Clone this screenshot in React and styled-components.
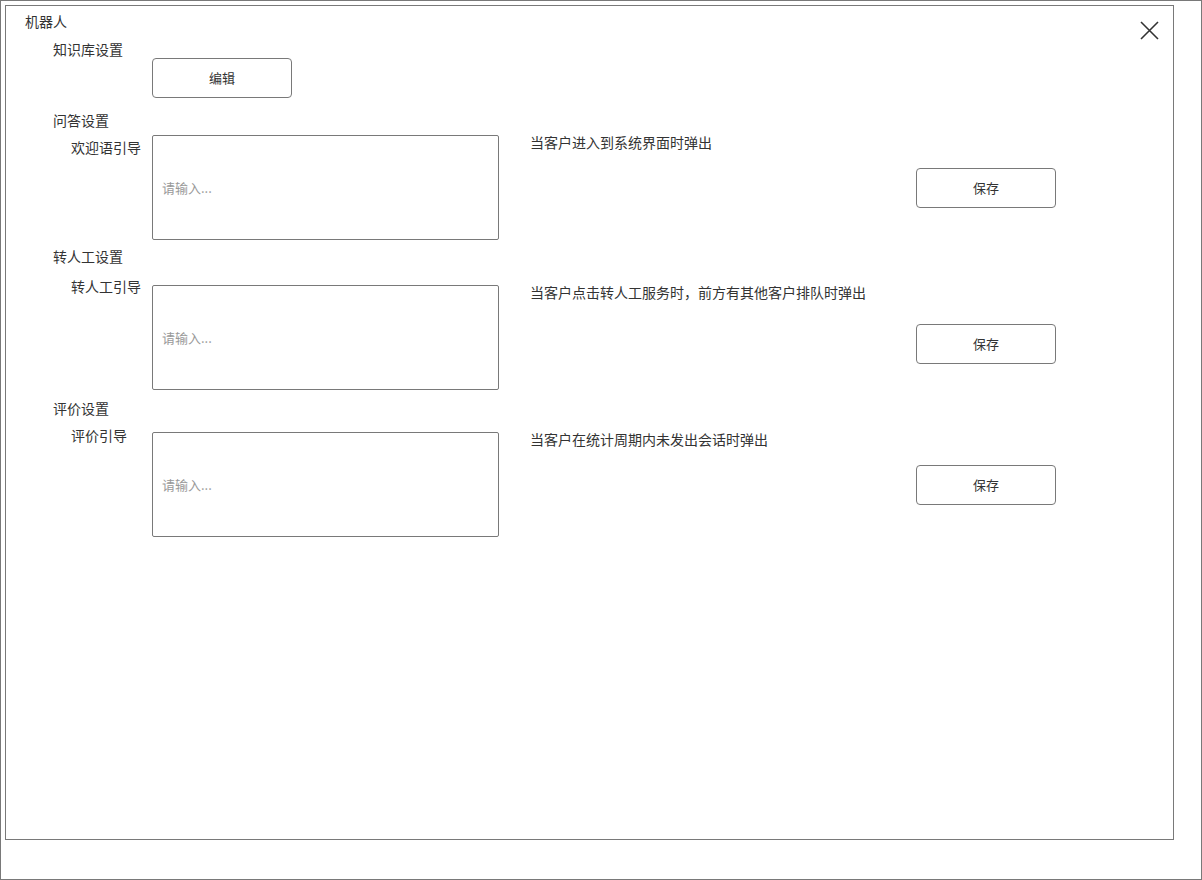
import React from "react";
import styled, { createGlobalStyle } from "styled-components";

const GlobalStyle = createGlobalStyle`
  html, body {
    margin: 0;
    padding: 0;
    background: #ffffff;
  }
  body {
    font-family: "Noto Sans CJK SC", "Noto Sans", sans-serif;
    color: #333333;
    font-size: 14px;
    line-height: 20px;
  }
  * {
    box-sizing: border-box;
  }
`;

const Frame = styled.div`
  width: 1202px;
  height: 880px;
  border: 1px solid #797979;
  padding: 4px;
`;

const Panel = styled.div`
  width: 1169px;
  height: 835px;
  border: 1px solid #797979;
  padding: 5px 14px 0 19px;
`;

const Header = styled.div`
  display: flex;
  justify-content: space-between;
  align-items: flex-start;
  height: 21px;
`;

const Title = styled.div`
  font-size: 14px;
  line-height: 20px;
`;

const CloseButton = styled.button`
  display: flex;
  padding: 0;
  margin-top: 10px;
  border: none;
  background: none;
  cursor: pointer;
  color: #333333;
`;

const Content = styled.div`
  padding-left: 28px;
`;

const SectionTitle = styled.div`
  margin-top: ${(p) => p.$top - 1}px;
  padding-bottom: 1px;
  font-size: 14px;
  line-height: 20px;
`;

const Row = styled.div`
  display: grid;
  grid-template-columns: 99px 347px 417px 140px;
  align-items: start;
  margin-top: ${(p) => p.$top}px;
`;

const FieldLabel = styled.div`
  padding-left: 18px;
  margin-top: ${(p) => p.$offset - 1}px;
  font-size: 14px;
  line-height: 20px;
`;

const Field = styled.input`
  width: 347px;
  height: 105px;
  margin: 0;
  border: 1px solid #797979;
  border-radius: 2px;
  padding: 0 9px;
  font-family: inherit;
  font-size: 13px;
  color: #333333;
  outline: none;

  &::placeholder {
    color: #999999;
  }
`;

const Hint = styled.div`
  padding-left: 31px;
  margin-top: -3px;
  font-size: 14px;
  line-height: 20px;
`;

const ActionButton = styled.button`
  width: 140px;
  height: 40px;
  margin-top: ${(p) => p.$offset || 0}px;
  padding: 0 0 1px;
  border: 1px solid #797979;
  border-radius: 4px;
  background: #ffffff;
  font-family: inherit;
  font-size: 13px;
  color: #333333;
  cursor: pointer;
`;

const EditRow = styled.div`
  margin-top: -2px;
  padding-left: 99px;
`;

const CloseIcon = () => (
  <svg width="19" height="19" viewBox="0 0 19 19" fill="none">
    <path d="M1 1L18 18M18 1L1 18" stroke="currentColor" strokeWidth="1.6" />
  </svg>
);

const sections = [
  {
    title: "问答设置",
    titleTop: 13,
    rowTop: 4,
    label: "欢迎语引导",
    labelOffset: 3,
    hint: "当客户进入到系统界面时弹出",
    buttonOffset: 33,
  },
  {
    title: "转人工设置",
    titleTop: 7,
    rowTop: 18,
    label: "转人工引导",
    labelOffset: -8,
    hint: "当客户点击转人工服务时，前方有其他客户排队时弹出",
    buttonOffset: 39,
  },
  {
    title: "评价设置",
    titleTop: 9,
    rowTop: 13,
    label: "评价引导",
    labelOffset: -6,
    hint: "当客户在统计周期内未发出会话时弹出",
    buttonOffset: 33,
  },
];

export default function App() {
  return (
    <>
      <GlobalStyle />
      <Frame>
        <Panel>
          <Header>
            <Title>机器人</Title>
            <CloseButton aria-label="关闭">
              <CloseIcon />
            </CloseButton>
          </Header>
          <Content>
            <SectionTitle $top={8}>知识库设置</SectionTitle>
            <EditRow>
              <ActionButton>编辑</ActionButton>
            </EditRow>
            {sections.map((s) => (
              <React.Fragment key={s.title}>
                <SectionTitle $top={s.titleTop}>{s.title}</SectionTitle>
                <Row $top={s.rowTop}>
                  <FieldLabel $offset={s.labelOffset}>{s.label}</FieldLabel>
                  <Field placeholder="请输入..." />
                  <Hint>{s.hint}</Hint>
                  <ActionButton $offset={s.buttonOffset}>保存</ActionButton>
                </Row>
              </React.Fragment>
            ))}
          </Content>
        </Panel>
      </Frame>
    </>
  );
}
